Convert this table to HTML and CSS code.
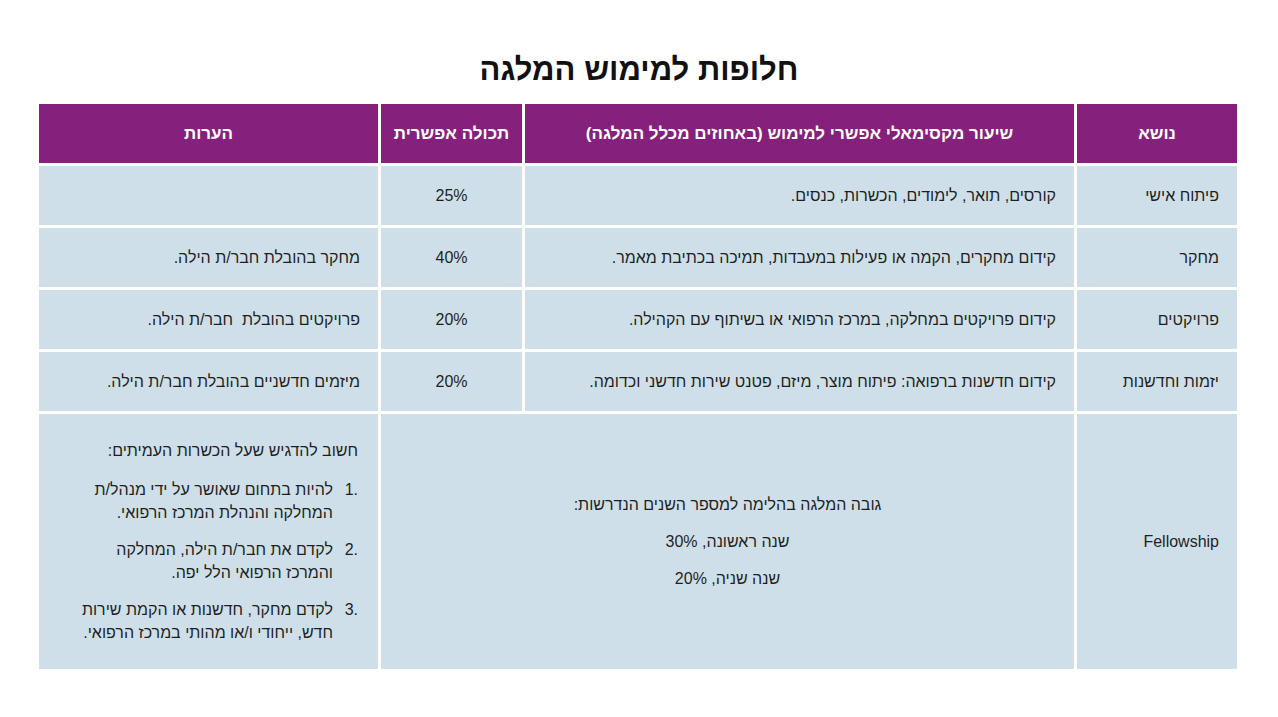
FILE: index.html
```html
<!DOCTYPE html>
<html lang="he" dir="rtl">
<head>
<meta charset="utf-8">
<title>חלופות למימוש המלגה</title>
<link rel="stylesheet" href="styles.css">
</head>
<body>
<main class="slide">
  <h1 class="title">חלופות למימוש המלגה</h1>
  <div class="table">
    <div class="cell head">נושא</div>
    <div class="cell head">שיעור מקסימאלי אפשרי למימוש (באחוזים מכלל המלגה)</div>
    <div class="cell head">תכולה אפשרית</div>
    <div class="cell head">הערות</div>

    <div class="cell">פיתוח אישי</div>
    <div class="cell">קורסים, תואר, לימודים, הכשרות, כנסים.</div>
    <div class="cell center">25%</div>
    <div class="cell"></div>

    <div class="cell">מחקר</div>
    <div class="cell">קידום מחקרים, הקמה או פעילות במעבדות, תמיכה בכתיבת מאמר.</div>
    <div class="cell center">40%</div>
    <div class="cell">מחקר בהובלת חבר/ת הילה.</div>

    <div class="cell">פרויקטים</div>
    <div class="cell">קידום פרויקטים במחלקה, במרכז הרפואי או בשיתוף עם הקהילה.</div>
    <div class="cell center">20%</div>
    <div class="cell">פרויקטים בהובלת&nbsp; חבר/ת הילה.</div>

    <div class="cell">יזמות וחדשנות</div>
    <div class="cell">קידום חדשנות ברפואה: פיתוח מוצר, מיזם, פטנט שירות חדשני וכדומה.</div>
    <div class="cell center">20%</div>
    <div class="cell">מיזמים חדשניים בהובלת חבר/ת הילה.</div>

    <div class="cell" dir="ltr"><span class="en">Fellowship</span></div>
    <div class="cell span2">
      <div class="stack">
        <p>גובה המלגה בהלימה למספר השנים הנדרשות:</p>
        <p>שנה ראשונה, 30%</p>
        <p>שנה שניה, 20%</p>
      </div>
    </div>
    <div class="cell notes">
      <div class="notes-inner">
        <p class="lead">חשוב להדגיש שעל הכשרות העמיתים:</p>
        <ol class="list">
          <li><span class="num">1.</span><span class="txt">להיות בתחום שאושר על ידי מנהל/ת המחלקה והנהלת המרכז הרפואי.</span></li>
          <li><span class="num">2.</span><span class="txt">לקדם את חבר/ת הילה, המחלקה והמרכז הרפואי הלל יפה.</span></li>
          <li><span class="num">3.</span><span class="txt">לקדם מחקר, חדשנות או הקמת שירות חדש, ייחודי ו/או מהותי במרכז הרפואי.</span></li>
        </ol>
      </div>
    </div>
  </div>
</main>
</body>
</html>
```
FILE: styles.css
```css
html, body {
  margin: 0;
  padding: 0;
  background: #ffffff;
}

body {
  font-family: "Liberation Sans", "DejaVu Sans", sans-serif;
  color: #1f1f1f;
}

.slide {
  width: 1278px;
  height: 717px;
  padding-top: 52px;
  box-sizing: border-box;
}

.title {
  margin: 0;
  height: 36px;
  line-height: 36px;
  font-size: 31px;
  font-weight: bold;
  text-align: center;
  color: #111111;
}

.table {
  direction: rtl;
  margin: 16px 41px 0 39px;
  display: grid;
  grid-template-columns: 160px 549px 141px 339px;
  grid-template-rows: 59px 59px 59px 59px 59px 255px;
  column-gap: 3px;
  row-gap: 3px;
}

.cell {
  background: #cfdfe9;
  display: flex;
  align-items: center;
  justify-content: flex-start;
  padding: 0 18px 0 18px;
  font-size: 16px;
  line-height: 20px;
  box-sizing: border-box;
}

.cell.head {
  background: #85207d;
  color: #ffffff;
  font-weight: bold;
  font-size: 17px;
  justify-content: center;
  padding: 0 4px;
  white-space: nowrap;
}

.cell.center {
  justify-content: center;
}

.cell[dir="ltr"] {
  justify-content: flex-end;
}

.span2 {
  grid-column: 2 / span 2;
  justify-content: center;
}

.stack {
  text-align: center;
}

.stack p {
  margin: 0;
  line-height: 20px;
}

.stack p + p {
  margin-top: 17px;
}

.notes {
  align-items: center;
  padding: 0 20px 0 30px;
}

.notes-inner {
  width: 100%;
}

.lead {
  margin: 0 0 16px 0;
  line-height: 23px;
}

.list {
  list-style: none;
  margin: 0;
  padding: 0;
}

.list li {
  display: flex;
  line-height: 23px;
}

.list li + li {
  margin-top: 14px;
}

.num {
  direction: ltr;
  width: 25px;
  flex: none;
  text-align: right;
}

.txt {
  flex: 1;
}
```
